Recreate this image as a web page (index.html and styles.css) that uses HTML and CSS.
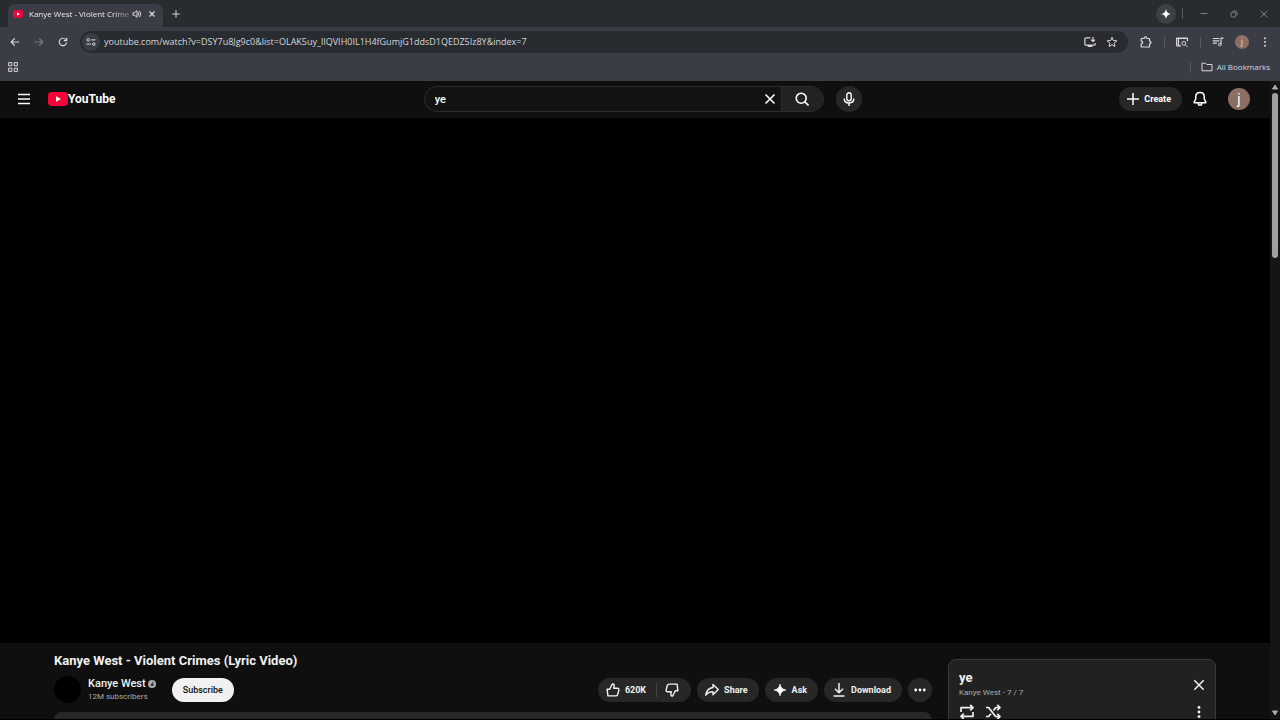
FILE: index.html
```html
<!DOCTYPE html>
<html lang="en">
<head>
<meta charset="utf-8">
<title>Kanye West - Violent Crimes (Lyric Video)</title>
<link rel="stylesheet" href="styles.css">
</head>
<body>
<div class="browser">
  <div class="tabstrip">
    <div class="tab">
      <svg class="favicon" viewBox="0 0 10 8"><rect width="10" height="8" rx="2" fill="#e8083e"/><path d="M4 2.3v3.4L7 4z" fill="#fff"/></svg>
      <span class="tab-title">Kanye West - Violent Crime</span>
      <svg class="ic10" viewBox="0 0 10 10"><path d="M1 3.7v2.6h1.6L5 8.3V1.7L2.6 3.7z"/><path d="M6.2 3.4q1.3 1.6 0 3.2M7.4 1.8q2.7 3.2 0 6.4"/></svg>
      <button class="plain tab-close" aria-label="Close tab"><svg class="ic8" viewBox="0 0 8 8"><path d="M1.5 1.5l5 5M6.5 1.5l-5 5" stroke-width="1.3"/></svg></button>
    </div>
    <button class="plain new-tab" aria-label="New tab"><svg class="ic10" viewBox="0 0 10 10"><path d="M5 1.3v7.4M1.3 5h7.4"/></svg></button>
    <div class="window-tools">
      <button class="plain spark" aria-label="Assistant"><svg class="ic10" viewBox="0 0 10 10"><path d="M5 0Q5.6 4.4 10 5 5.6 5.6 5 10 4.4 5.6 0 5 4.4 4.4 5 0z" fill="#fff" stroke="none"/></svg></button>
      <span class="sep"></span>
      <button class="plain win" aria-label="Minimize"><svg class="ic8" viewBox="0 0 8 8"><path d="M.5 3.500h7"/></svg></button>
      <button class="plain win" aria-label="Restore"><svg class="ic8" viewBox="0 0 8 8"><rect x="1" y="2.3" width="4.7" height="4.7" rx="1"/><path d="M2.6 1h3q1.4 0 1.4 1.4v3"/></svg></button>
      <button class="plain win" aria-label="Close"><svg class="ic8" viewBox="0 0 8 8"><path d="M.7.7l6.6 6.6M7.3.7L.7 7.3"/></svg></button>
    </div>
  </div>

  <div class="toolbar">
    <div class="nav">
      <button class="plain" aria-label="Back"><svg class="ic10" viewBox="0 0 10 10"><path d="M9.2 5H1.2M4.8 1.3L1.2 5l3.6 3.7" stroke-width="1.2"/></svg></button>
      <button class="plain dim" aria-label="Forward"><svg class="ic10" viewBox="0 0 10 10"><path d="M.8 5h8M5.2 1.3L8.8 5 5.2 8.7" stroke-width="1.2"/></svg></button>
      <button class="plain" aria-label="Reload"><svg class="ic10" viewBox="0 0 10 10"><path d="M8.6 5.5A3.7 3.7 0 1 1 7.8 2.6M8.7.8v2.9H5.8" stroke-width="1.2"/></svg></button>
    </div>
    <div class="omnibox">
      <button class="plain site-info" aria-label="Site information"><svg class="ic10" viewBox="0 0 10 10"><circle cx="2.2" cy="2.9" r="1.3"/><path d="M5 2.9h4.5M.5 7.1H5"/><circle cx="7.8" cy="7.1" r="1.3"/></svg></button>
      <input class="url" type="text" aria-label="Address" value="youtube.com/watch?v=DSY7u8Jg9c0&amp;list=OLAK5uy_lIQVIH0IL1H4fGumjG1ddsD1QEDZ5Iz8Y&amp;index=7">
      <button class="plain" aria-label="Install app"><svg class="ic12" viewBox="0 0 12 12"><path d="M6.500 1.800H1.800q-.9 0-.9.9v5.600q0 .9.900.9h8.400q.9 0 .9-.9V7M3.700 10.300h4.600M9 .8v4.600M7 3.600l2 2 2-2" stroke-width="1.2"/></svg></button>
      <button class="plain" aria-label="Bookmark this page"><svg class="ic12" viewBox="0 0 12 12"><path d="M6 1.300l1.300 3.200 3.500.3-2.700 2.300.9 3.400-3-1.900-3 1.900.9-3.400L1.200 4.800l3.500-.3z"/></svg></button>
    </div>
    <div class="extensions">
      <button class="plain" aria-label="Extensions"><svg class="ic12" viewBox="0 0 12 12"><path d="M1.200 2.500h2.900q0-1.600 1.400-1.600t1.400 1.600h2.600v2.600q1.500 0 1.500 1.400T9.500 7.900v3.100H1.200V7.900q1.500 0 1.500-1.400T1.200 5.100z" stroke-width="1.2"/></svg></button>
      <span class="sep"></span>
      <button class="plain" aria-label="Search this page"><svg class="ic12" viewBox="0 0 12 12"><path d="M5 9.800H1.500q-.9 0-.9-.9V2h10.800v3.200M.6 2.500h10.800M2.500 3v6.500" stroke-width="1.2"/><circle cx="7.800" cy="7.300" r="1.900"/><path d="M9.200 8.700l2.200 2.200"/></svg></button>
      <span class="sep"></span>
      <button class="plain" aria-label="Media controls"><svg class="ic12" viewBox="0 0 12 12"><path d="M.8 2.500h6.500M.8 4.800h6.500M.8 7.100h4M9 8.500V2.200h2.500" stroke-width="1.2"/><circle cx="7.800" cy="8.500" r="1.300"/></svg></button>
      <button class="plain profile" aria-label="Profile">j</button>
      <button class="plain" aria-label="Menu"><svg class="ic10" viewBox="0 0 10 10"><g fill="currentColor" stroke="none"><circle cx="5" cy="1.200" r="1"/><circle cx="5" cy="5" r="1"/><circle cx="5" cy="8.800" r="1"/></g></svg></button>
    </div>
  </div>

  <div class="bookmarks">
    <button class="plain" aria-label="Apps"><svg class="ic10" viewBox="0 0 10 10"><path d="M.6.6h3.200v3.200H.6zM6.200.6h3.200v3.200H6.200zM.6 6.200h3.200v3.200H.6zM6.200 6.200h3.200v3.200H6.200z"/></svg></button>
    <div class="bookmark-end">
      <span class="sep"></span>
      <button class="plain all-bookmarks"><svg class="ic12" viewBox="0 0 12 12"><path d="M1 2.200h3.600l1.200 1.300H11v6.300H1z"/></svg>All Bookmarks</button>
    </div>
  </div>
</div>

<div class="viewport">
  <div class="page">
    <header class="masthead">
      <div class="start">
        <button class="plain" aria-label="Guide"><svg class="ic12" viewBox="0 0 12 12"><path d="M0 1.500h12M0 6h12M0 10.500h12" stroke-width="1.400"/></svg></button>
        <a class="logo" href="#" aria-label="YouTube Home"><svg class="play" viewBox="0 0 20 14"><rect width="20" height="14" rx="4" fill="#f50537"/><path d="M8 4.200v5.600L13 7z" fill="#fff"/></svg><span>YouTube</span></a>
      </div>
      <div class="center">
        <form class="search" role="search">
          <input class="query" type="text" aria-label="Search" value="ye">
          <button class="plain clear" type="button" aria-label="Clear"><svg class="ic12" viewBox="0 0 12 12"><path d="M1.500 1.500l9 9M10.500 1.500l-9 9" stroke-width="1.600"/></svg></button>
          <button class="plain go" type="button" aria-label="Search"><svg class="ic14" viewBox="0 0 14 14"><circle cx="6.200" cy="6.200" r="5" stroke-width="1.600"/><path d="M9.800 9.800l3.700 3.700" stroke-width="1.600"/></svg></button>
        </form>
        <button class="round mic" aria-label="Search with your voice"><svg class="ic14" viewBox="0 0 14 14"><g stroke-width="1.400"><rect x="4.800" y=".8" width="4.400" height="8" rx="2.200"/><path d="M2.200 6.500q0 4.500 4.800 4.500t4.800-4.500M7 11v3"/></g></svg></button>
      </div>
      <div class="end">
        <button class="pill create"><svg class="ic12" viewBox="0 0 12 12"><path d="M6 0v12M0 6h12" stroke-width="1.500"/></svg>Create</button>
        <button class="plain bell" aria-label="Notifications"><svg class="ic16" viewBox="0 0 16 16"><path d="M8 1.500q-4.300 0-4.300 4.700v2.200L2.200 10.800v1h11.600v-1l-1.500-2.400V6.200Q12.300 1.500 8 1.500zM6 12.300q.3 2 2 2t2-2" stroke-width="1.500"/></svg></button>
        <button class="plain avatar" aria-label="Account">j</button>
      </div>
    </header>

    <div class="player"></div>

    <main class="columns">
      <section class="primary">
        <h1 class="title">Kanye West - Violent Crimes (Lyric Video)</h1>
        <div class="meta">
          <div class="owner">
            <span class="channel-pic"></span>
            <div class="channel">
              <a class="name" href="#">Kanye West<svg class="badge" viewBox="0 0 8 8"><circle cx="4" cy="4" r="4" fill="#aaa"/><path d="M5.300 1.500v3.200a1.200 1.200 0 1 1-.8-1V1.500z" fill="#222"/></svg></a>
              <span class="subs">12M subscribers</span>
            </div>
            <button class="pill subscribe">Subscribe</button>
          </div>
          <div class="actions">
            <div class="vote">
              <button class="pill like"><svg class="ic14" viewBox="0 0 14 14"><path d="M1.100 6.200H3.700L6.300 1q1.900-.1 1.900 1.700L7.700 5.200h3.800q1.600.2 1.400 1.700l-1.200 4.600q-.4 1.400-1.900 1.400H1.900z" stroke-width="1.400"/></svg>620K</button>
              <button class="pill dislike" aria-label="Dislike"><svg class="ic14" viewBox="0 0 14 14"><path d="M12.900 7.800H10.300L7.700 13q-1.900.1-1.900-1.700l.5-2.500H2.500Q.9 8.600 1.100 7.100l1.200-4.600Q2.700 1.100 4.200 1.100h7.900z" stroke-width="1.400"/></svg></button>
            </div>
            <button class="pill"><svg class="ic14" viewBox="0 0 14 14"><path d="M8 1.500l5.300 5.100L8 11.700V8.800Q3.200 8.800.8 12.200 1.700 5.300 8 4.500z" stroke-width="1.400"/></svg>Share</button>
            <button class="pill"><svg class="ic14" viewBox="0 0 14 14"><path d="M7 1Q7.800 6.200 13 7 7.800 7.800 7 13 6.200 7.800 1 7 6.200 6.200 7 1z" fill="#fff" stroke-width=".6"/></svg>Ask</button>
            <button class="pill"><svg class="ic14" viewBox="0 0 14 14"><path d="M7 0v9.500M3 5.700l4 4 4-4M1.500 13h11" stroke-width="1.500"/></svg>Download</button>
            <button class="round more" aria-label="More actions"><svg class="ic12" viewBox="0 0 12 12"><g fill="#fff" stroke="none"><circle cx="1.700" cy="6" r="1.400"/><circle cx="6" cy="6" r="1.400"/><circle cx="10.300" cy="6" r="1.400"/></g></svg></button>
          </div>
        </div>
        <div class="description"></div>
      </section>

      <aside class="playlist">
        <div class="playlist-head">
          <div>
            <h2 class="playlist-title">ye</h2>
            <p class="playlist-sub">Kanye West - 7 / 7</p>
          </div>
          <button class="plain" aria-label="Close playlist"><svg class="ic12" viewBox="0 0 12 12"><path d="M1.300 1.300l9.400 9.400M10.700 1.300l-9.400 9.400" stroke-width="1.500"/></svg></button>
        </div>
        <div class="playlist-tools">
          <button class="plain" aria-label="Loop playlist"><svg class="ic16" viewBox="0 0 16 16"><path d="M2 8V3.700h11.500M11.200.9L14 3.700l-2.800 2.800M14 8v4.300H2.500M4.800 9.500L2 12.300l2.800 2.800" stroke-width="1.700"/></svg></button>
          <button class="plain" aria-label="Shuffle playlist"><svg class="ic16" viewBox="0 0 16 16"><path d="M1 3.500h2.600l7 9H15M1 12.500h2.600L6 9.700M8.500 6.500l2.300-3H15M12.300.8L15 3.500l-2.700 2.700M12.300 9.800l2.700 2.700-2.700 2.700" stroke-width="1.700"/></svg></button>
          <button class="plain kebab" aria-label="Playlist menu"><svg class="ic12" viewBox="0 0 12 12"><g fill="#fff" stroke="none"><circle cx="6" cy="1.400" r="1.400"/><circle cx="6" cy="6" r="1.400"/><circle cx="6" cy="10.600" r="1.400"/></g></svg></button>
        </div>
      </aside>
    </main>
  </div>
  <div class="scrollbar" aria-hidden="true">
    <svg class="arrow" viewBox="0 0 8 8"><path d="M4 2L6.500 6h-5z" fill="#aaa" stroke="#aaa"/></svg>
    <span class="thumb"></span>
    <svg class="arrow down" viewBox="0 0 8 8"><path d="M4 6L1.500 2h5z" fill="#aaa" stroke="#aaa"/></svg>
  </div>
</div>
</body>
</html>
```

FILE: styles.css
```css
* { box-sizing: border-box; }

body {
  margin: 0;
  height: 100vh;
  display: flex;
  flex-direction: column;
  overflow: hidden;
  border-bottom: 1px solid #000;
  background: #0f0f0f;
  color: #f1f1f1;
  font-family: Roboto, "Liberation Sans", sans-serif;
}

button, input { font: inherit; color: inherit; }
button { cursor: pointer; }
a { color: inherit; text-decoration: none; }
h1, h2, p { margin: 0; }

svg {
  display: block;
  flex: none;
  fill: none;
  stroke: currentColor;
  stroke-linejoin: round;
}
svg [fill^="#"]:not([stroke]):not([stroke-width]) { stroke: none; }
.ic8 { width: 8px; height: 8px; }
.ic10 { width: 10px; height: 10px; }
.ic12 { width: 12px; height: 12px; }
.ic14 { width: 14px; height: 14px; }
.ic16 { width: 16px; height: 16px; }

.plain {
  display: flex;
  align-items: center;
  justify-content: center;
  padding: 0;
  border: 0;
  background: none;
}

/* Browser frame */
.browser {
  flex: none;
  background: #3b3d46;
  color: #d5d7dc;
  font: 9px/12px "Open Sans", "Noto Sans", sans-serif;
}
.tabstrip {
  display: flex;
  align-items: center;
  height: 27px;
  padding: 0 10px 0 8px;
  background: #292c2f;
}
.tab {
  display: flex;
  align-items: center;
  align-self: flex-end;
  width: 155px;
  height: 23px;
  padding: 0 7px 3px 5px;
  border-radius: 7px 7px 0 0;
  background: #3b3d46;
}
.favicon { width: 10px; height: 8px; }
.tab-title {
  flex: 1;
  margin: 0 3px 0 6px;
  color: #e6e7ea;
  font-size: 8px;
  white-space: nowrap;
  mask-image: linear-gradient(to right, #000 85%, #0004);
}
.tab-close { margin-left: 6px; }
.new-tab { margin-left: 8px; }
.window-tools {
  display: flex;
  align-items: center;
  margin-left: auto;
  color: #7c7f84;
}
.spark {
  width: 20px;
  height: 20px;
  margin-right: 6px;
  border-radius: 50%;
  background: #3d4043;
}
.win { width: 12px; margin-left: 15px; }
.win + .win { margin-left: 18px; }
.sep { width: 1px; height: 11px; background: #565962; }

.toolbar {
  display: flex;
  align-items: center;
  height: 30px;
  padding: 0 10px;
}
.nav { display: flex; gap: 14px; margin-right: 12px; }
.dim { color: #777a82; }
.omnibox {
  display: flex;
  align-items: center;
  flex: 1;
  gap: 10px;
  height: 22px;
  padding: 0 10px 0 2px;
  border-radius: 11px;
  background: #282b30;
}
.site-info {
  width: 18px;
  height: 18px;
  border-radius: 50%;
  background: #3b3d46;
}
.url {
  flex: 1;
  min-width: 0;
  margin-left: -6px;
  padding: 0;
  border: 0;
  outline: 0;
  background: none;
}
.extensions {
  display: flex;
  align-items: center;
  gap: 11px;
  margin-left: 12px;
}
.extensions .sep { margin-left: 1px; }
.profile {
  width: 14px;
  height: 14px;
  border-radius: 50%;
  background: #8d6e63;
}
.bookmarks {
  display: flex;
  align-items: center;
  justify-content: space-between;
  height: 24px;
  padding: 0 10px 4px 8px;
}
.bookmark-end, .all-bookmarks { display: flex; align-items: center; }
.bookmark-end { gap: 10px; font-size: 8px; }
.all-bookmarks { gap: 4px; }

/* Page */
.viewport { display: flex; flex: 1; min-height: 0; }
.page { flex: 1; min-width: 0; overflow: hidden; }
.scrollbar {
  display: flex;
  flex-direction: column;
  align-items: center;
  width: 10px;
  padding: 2px 0;
  background: #151515;
}
.arrow { width: 8px; height: 8px; }
.thumb {
  width: 6px;
  height: 26%;
  margin-top: 2px;
  border-radius: 3px;
  background: #a0a0a0;
}
.down { margin-top: auto; }

.masthead {
  display: flex;
  align-items: center;
  justify-content: space-between;
  height: 37px;
  padding: 0 20px 1px 18px;
  color: #fff;
}
.start { display: flex; align-items: center; gap: 18px; width: 148px; }
.logo {
  display: flex;
  align-items: center;
  font-size: 12px;
  line-height: 16px;
  font-weight: 700;
}
.play { width: 20px; height: 14px; }
.center { display: flex; gap: 12px; width: 438px; }
.search {
  display: flex;
  flex: 1;
  height: 26px;
  overflow: hidden;
  border: 1px solid #2c2c2c;
  border-radius: 13px;
  background: #121212;
}
.query {
  flex: 1;
  min-width: 0;
  padding: 0 0 0 10px;
  border: 0;
  outline: 0;
  background: none;
  font-size: 11px;
  font-weight: 500;
}
.clear { width: 22px; }
.go { width: 42px; border-left: 1px solid #2c2c2c; background: #222; }
.round {
  display: flex;
  align-items: center;
  justify-content: center;
  padding: 0;
  border: 0;
  border-radius: 50%;
  background: #272727;
}
.mic { width: 26px; height: 26px; }
.end { display: flex; align-items: center; }
.pill {
  display: flex;
  align-items: center;
  gap: 5px;
  height: 24px;
  padding: 0 11px 0 8px;
  border: 0;
  border-radius: 12px;
  background: #272727;
  font-size: 9px;
  font-weight: 700;
  white-space: nowrap;
}
.bell { margin: 0 20px 0 10px; }
.avatar {
  width: 22px;
  height: 22px;
  border-radius: 50%;
  background: #8d6e63;
  font-size: 14px;
}

.player { height: calc(100vh - 195px); background: #000; }

.columns {
  display: grid;
  grid-template-columns: minmax(0, 1fr) 268px;
  gap: 16px;
  padding: 0 54px;
}
.title {
  margin-top: 9px;
  font-size: 13px;
  line-height: 18px;
  font-weight: 700;
}
.meta {
  display: flex;
  align-items: center;
  justify-content: space-between;
  margin-top: 5px;
  height: 29px;
}
.owner, .channel, .actions, .vote { display: flex; }
.owner { align-items: center; }
.channel-pic {
  width: 27px;
  height: 27px;
  margin-right: 7px;
  border-radius: 50%;
  background: #000;
}
.channel { flex-direction: column; margin-right: 16px; }
.name {
  display: flex;
  align-items: center;
  gap: 2px;
  font-size: 11px;
  line-height: 14px;
  font-weight: 500;
}
.badge { width: 8px; height: 8px; }
.subs { color: #aaa; font-size: 8px; line-height: 12px; }
.subscribe { padding: 0 11px; background: #f1f1f1; color: #0f0f0f; font-weight: 500; }
.actions { gap: 6px; }
.like { padding-right: 10px; border-radius: 12px 0 0 12px; }
.dislike {
  position: relative;
  padding: 0 12px 0 9px;
  border-radius: 0 12px 12px 0;
}
.dislike::before {
  content: "";
  position: absolute;
  left: 0;
  top: 5px;
  width: 1px;
  height: 14px;
  background: #444;
}
.more { width: 24px; height: 24px; }
.description {
  height: 60px;
  margin-top: 8px;
  border-radius: 8px;
  background: #272727;
}

.playlist {
  height: 120px;
  margin-top: 16px;
  padding: 10px;
  border: 1px solid #3a3a3a;
  border-radius: 8px;
  background: #212121;
}
.playlist-head {
  display: flex;
  align-items: center;
  justify-content: space-between;
}
.playlist-title { font-size: 13px; line-height: 16px; font-weight: 700; }
.playlist-sub { color: #aaa; font-size: 8px; line-height: 14px; }
.playlist-tools { display: flex; gap: 10px; margin-top: 4px; }
.kebab { margin-left: auto; }
```
